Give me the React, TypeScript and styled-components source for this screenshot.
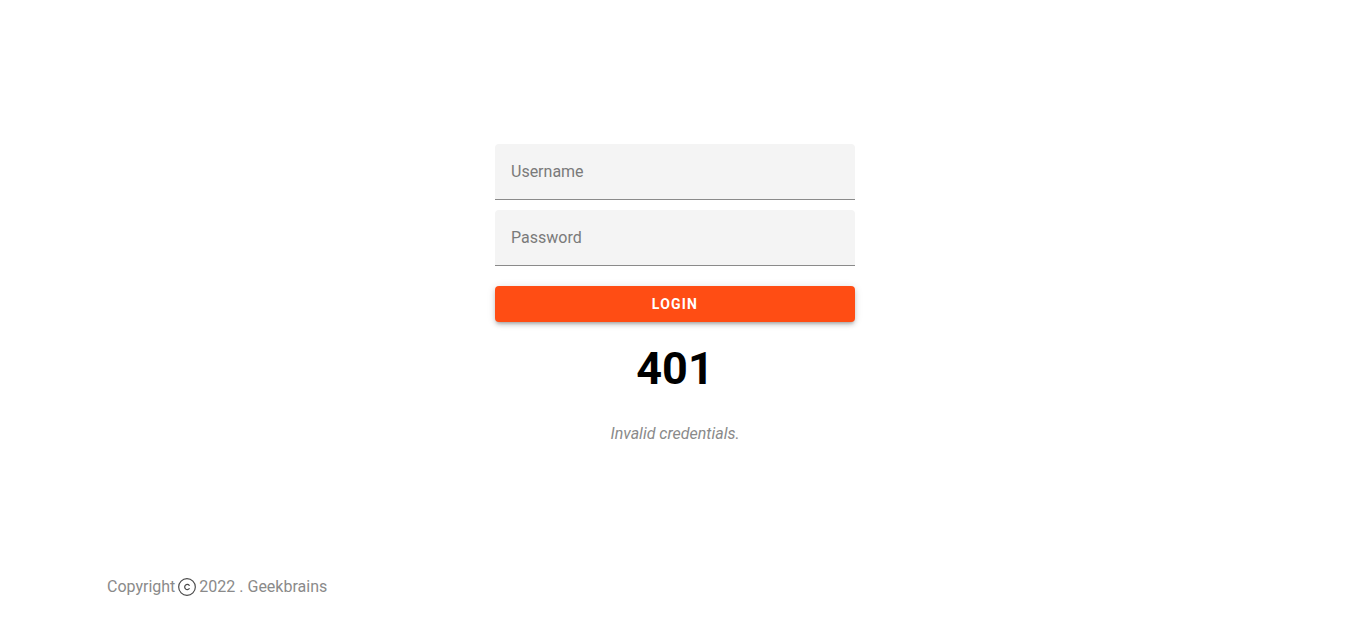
import React from "react";
import styled, { createGlobalStyle } from "styled-components";

const Global = createGlobalStyle`
  html, body { margin: 0; padding: 0; background: #fff; }
  body { font-family: Roboto, "Noto Sans", Arial, sans-serif; }
  * { box-sizing: border-box; }
`;

const Page = styled.div`
  min-height: 100vh;
  display: flex;
  flex-direction: column;
`;

const Main = styled.main`
  flex: 1;
  display: flex;
  justify-content: center;
  padding-top: 144px;
`;

const Form = styled.form`
  width: 360px;
  display: flex;
  flex-direction: column;
`;

const Field = styled.div`
  height: 56px;
  background: #f4f4f4;
  border-radius: 4px 4px 0 0;
  border-bottom: 1px solid #8a8a8a;
  display: flex;
  align-items: center;
  padding: 0 16px;
  margin-bottom: 10px;
`;

const Input = styled.input`
  border: none;
  background: transparent;
  outline: none;
  width: 100%;
  font-family: Roboto, sans-serif;
  font-size: 16px;
  color: #222;
  padding: 0;
  &::placeholder { color: #7a7a7a; }
`;

const Button = styled.button`
  margin-top: 10px;
  height: 36px;
  border: none;
  border-radius: 4px;
  background: #ff4d14;
  color: #fff;
  font-family: Roboto, sans-serif;
  font-weight: 700;
  font-size: 14px;
  letter-spacing: 1.2px;
  text-transform: uppercase;
  box-shadow: 0 3px 3px -2px rgba(0,0,0,0.2), 0 3px 4px 0 rgba(0,0,0,0.14), 0 1px 8px 0 rgba(0,0,0,0.12);
  cursor: pointer;
`;

const Code = styled.h3`
  margin: 19px 0 0;
  text-align: center;
  font-size: 45px;
  line-height: 56px;
  font-weight: 700;
  color: #000;
`;

const Message = styled.p`
  margin: 25px 0 0;
  text-align: center;
  font-style: italic;
  font-size: 16px;
  line-height: 24px;
  color: #8a8a8a;
`;

const Footer = styled.footer`
  padding: 0 107px 22px;
  display: flex;
  align-items: center;
  font-size: 16px;
  line-height: 24px;
  color: #8a8a8a;
`;

const Icon = styled.svg`
  width: 20px;
  height: 20px;
  margin: 0 2px 0 2px;
  fill: none;
  stroke: #4a4a4a;
`;

export default function App() {
  return (
    <Page>
      <Global />
      <Main>
        <Form onSubmit={(e) => e.preventDefault()}>
          <Field><Input placeholder="Username" /></Field>
          <Field><Input placeholder="Password" type="password" /></Field>
          <Button type="submit">Login</Button>
          <Code>401</Code>
          <Message>Invalid credentials.</Message>
        </Form>
      </Main>
      <Footer>
        <span>Copyright</span>
        <Icon viewBox="0 0 24 24">
          <circle cx="12" cy="12" r="10" strokeWidth="1.4" />
          <path d="M14.7 10a3.1 3.1 0 1 0 0 4" strokeWidth="1.5" strokeLinecap="round" />
        </Icon>
        <span>2022 . Geekbrains</span>
      </Footer>
    </Page>
  );
}
